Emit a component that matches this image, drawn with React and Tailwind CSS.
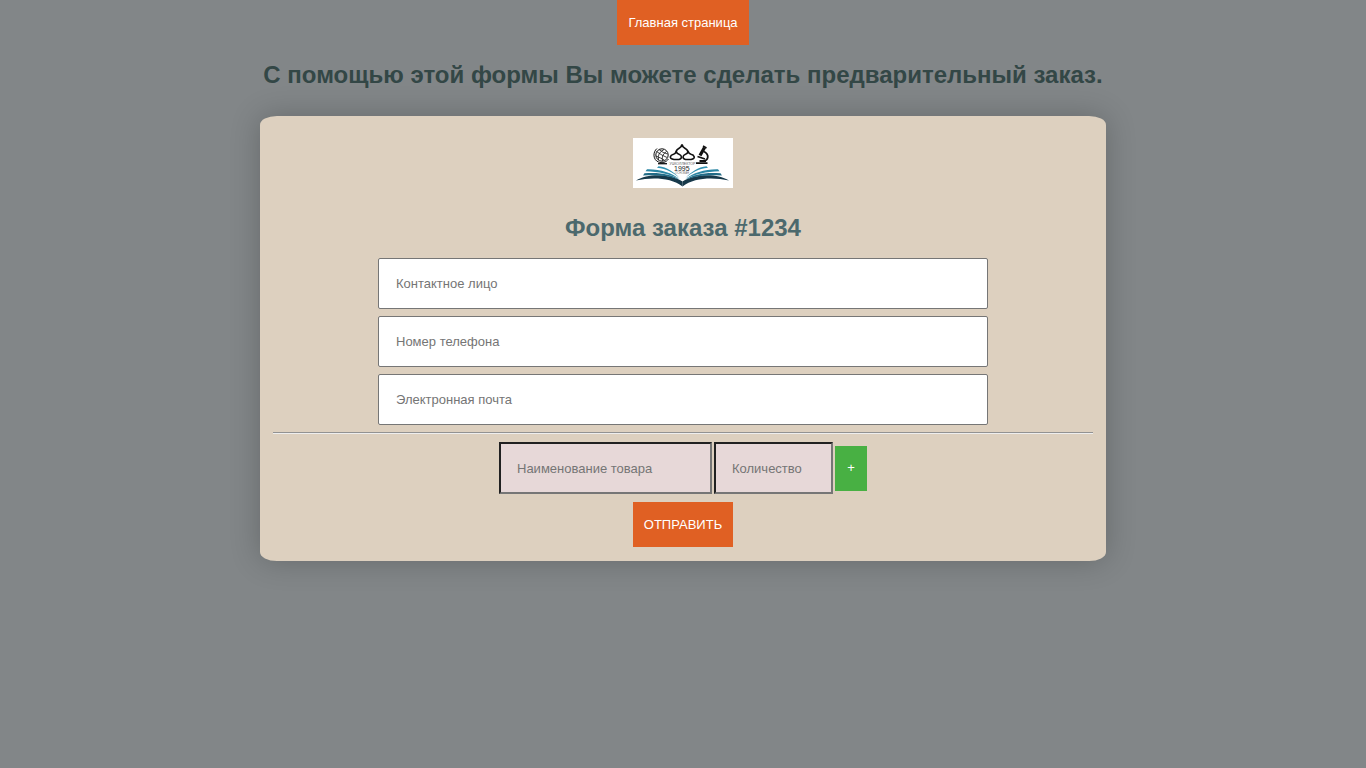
import React from 'react';

function BookHalf() {
  return (
    <>
      <path d="M3 42.5 C15 35 37 35.500 49.5 43.500 V48.5 C38 39.500 19 39 3 42.500Z" fill="#17394a" />
      <path d="M10 37.500 L11.500 35.300 C25 34 39 36 46 41.500 C36 37.500 24 36.500 10 37.500Z" fill="#226c87" />
      <path d="M12.500 33.300 L14 31.300 C27 31 39 35 46.500 41 C37 36 26 33.700 12.500 33.300Z" fill="#2b86a4" />
      <path d="M24 29.800 L25.500 28.200 C34 29 41 34 46.500 40 C40 34.500 34 31 24 29.800Z" fill="#3192b2" />
    </>
  );
}

function Logo() {
  return (
    <svg
      className="block h-[50px] w-[100px] bg-white"
      viewBox="0 0 100 50"
      role="img"
      aria-label="Учколлектор, основан 1995"
    >
      <BookHalf />
      <g transform="translate(99 0) scale(-1 1)">
        <BookHalf />
      </g>
      <g fill="none" stroke="#111" strokeWidth="1">
        <circle cx="29" cy="17" r="6.200" />
        <path d="M23.500 13.500 Q29 17.500 34 19.500 M23 18 Q28 20 31.500 22.200 M26 11.500 Q30 15 34.500 16 M31 11.500 Q24 15 25.500 22 M33.500 13.500 Q28 17 29.500 23" strokeWidth=".8" />
        <path d="M24 10.500 C19.500 14 20 22 25.500 24 C29 25.500 33 24.500 35.500 21 M29 24 V26" />
        <path d="M25 25.700 H34" strokeWidth="1.300" />
      </g>
      <g fill="none" stroke="#111" strokeWidth="1.600" strokeLinejoin="round">
        <path d="M43.500 15 C41.500 10.500 48 11 49 7.300 C50 11 56.500 10.500 54.500 15" />
        <path d="M41 21.500 C35 20.500 37.500 17 40.500 16.300 Q42.500 15.700 43.200 13.500 Q44 15.700 46 16.300 C49 17.500 49.500 20.500 46 21.500 Z" />
        <path d="M52.500 21.500 C49 20.500 49.500 17.500 52.500 16.300 Q54.500 15.700 55.200 13.500 Q56 15.700 58 16.300 C61 17 63.500 20.500 58 21.500 Z" />
      </g>
      <circle cx="49" cy="7.500" r="1.300" fill="#111" />
      <g fill="none" stroke="#111">
        <path d="M71.500 9.500 L67 17.500" strokeWidth="3.200" />
        <path d="M70 8 L73.500 10" strokeWidth="1.500" />
        <path d="M71 13.500 C77 17 75 22 71 23.500 M64.500 18.500 L72 21" strokeWidth="1.800" />
        <path d="M63 25.200 H74.500 M66.500 23 H73" strokeWidth="1.800" />
      </g>
      <g textAnchor="middle" className="font-['Liberation_Sans',sans-serif]">
        <text x="49.500" y="26.700" fontSize="3.600" fill="#555">УЧКОЛЛЕКТОР</text>
        <text x="48.800" y="32.500" fontSize="7" fill="#222">1995</text>
        <text x="49" y="35.500" fontSize="2.800" fill="#777">ОСНОВАН</text>
      </g>
    </svg>
  );
}

const contactFields = [
  { id: 'person', label: 'Контактное лицо', type: 'text' },
  { id: 'phone', label: 'Номер телефона', type: 'tel' },
  { id: 'email', label: 'Электронная почта', type: 'email' },
];

export default function App() {
  return (
    <div className="flex min-h-screen flex-col items-center bg-[#828688] font-['Liberation_Sans',Arial,sans-serif] text-[13px]">
      <a href="#" className="flex h-[45px] items-center bg-[#e06023] px-[11px] text-white">
        Главная страница
      </a>
      <h1 className="mt-4 text-center text-2xl leading-7 font-bold text-[#334746]">
        С помощью этой формы Вы можете сделать предварительный заказ.
      </h1>
      <form
        className="mt-[27px] flex w-[62%] flex-col items-center rounded-[2%] bg-[#ddd0bf] px-[13px] pt-[22px] pb-3.5 shadow-[0_0_30px_rgba(0,0,0,0.22)]"
        onSubmit={(event) => event.preventDefault()}
      >
        <Logo />
        <h2 className="mt-[26px] text-2xl leading-7 font-bold text-[#4c696d]">Форма заказа #1234</h2>
        <div className="mt-4 flex w-full max-w-[610px] flex-col gap-[7px]">
          {contactFields.map((field) => (
            <input
              key={field.id}
              id={field.id}
              type={field.type}
              aria-label={field.label}
              placeholder={field.label}
              className="h-[51px] w-full rounded-[2px] border border-[#767676] bg-white px-[17px] placeholder:text-[#757575]"
            />
          ))}
        </div>
        <hr className="mt-[7px] h-0.5 w-full border-t border-b border-t-[#929292] border-b-[#eeeeee]" />
        <div className="mt-2 flex items-center gap-0.5">
          <input
            type="text"
            aria-label="Наименование товара"
            placeholder="Наименование товара"
            className="h-[52px] w-[213px] border-2 border-t-[#212121] border-r-[#767676] border-b-[#767676] border-l-[#212121] bg-[#e7d8d8] px-4 placeholder:text-[#757575]"
          />
          <input
            type="text"
            aria-label="Количество"
            placeholder="Количество"
            className="h-[52px] w-[119px] border-2 border-t-[#212121] border-r-[#767676] border-b-[#767676] border-l-[#212121] bg-[#e7d8d8] px-4 placeholder:text-[#757575]"
          />
          <button type="button" aria-label="Добавить товар" className="h-[45px] w-8 bg-[#48b043] text-white">
            +
          </button>
        </div>
        <button type="submit" className="mt-2 h-[45px] bg-[#e06023] px-[11px] text-white">
          ОТПРАВИТЬ
        </button>
      </form>
    </div>
  );
}
